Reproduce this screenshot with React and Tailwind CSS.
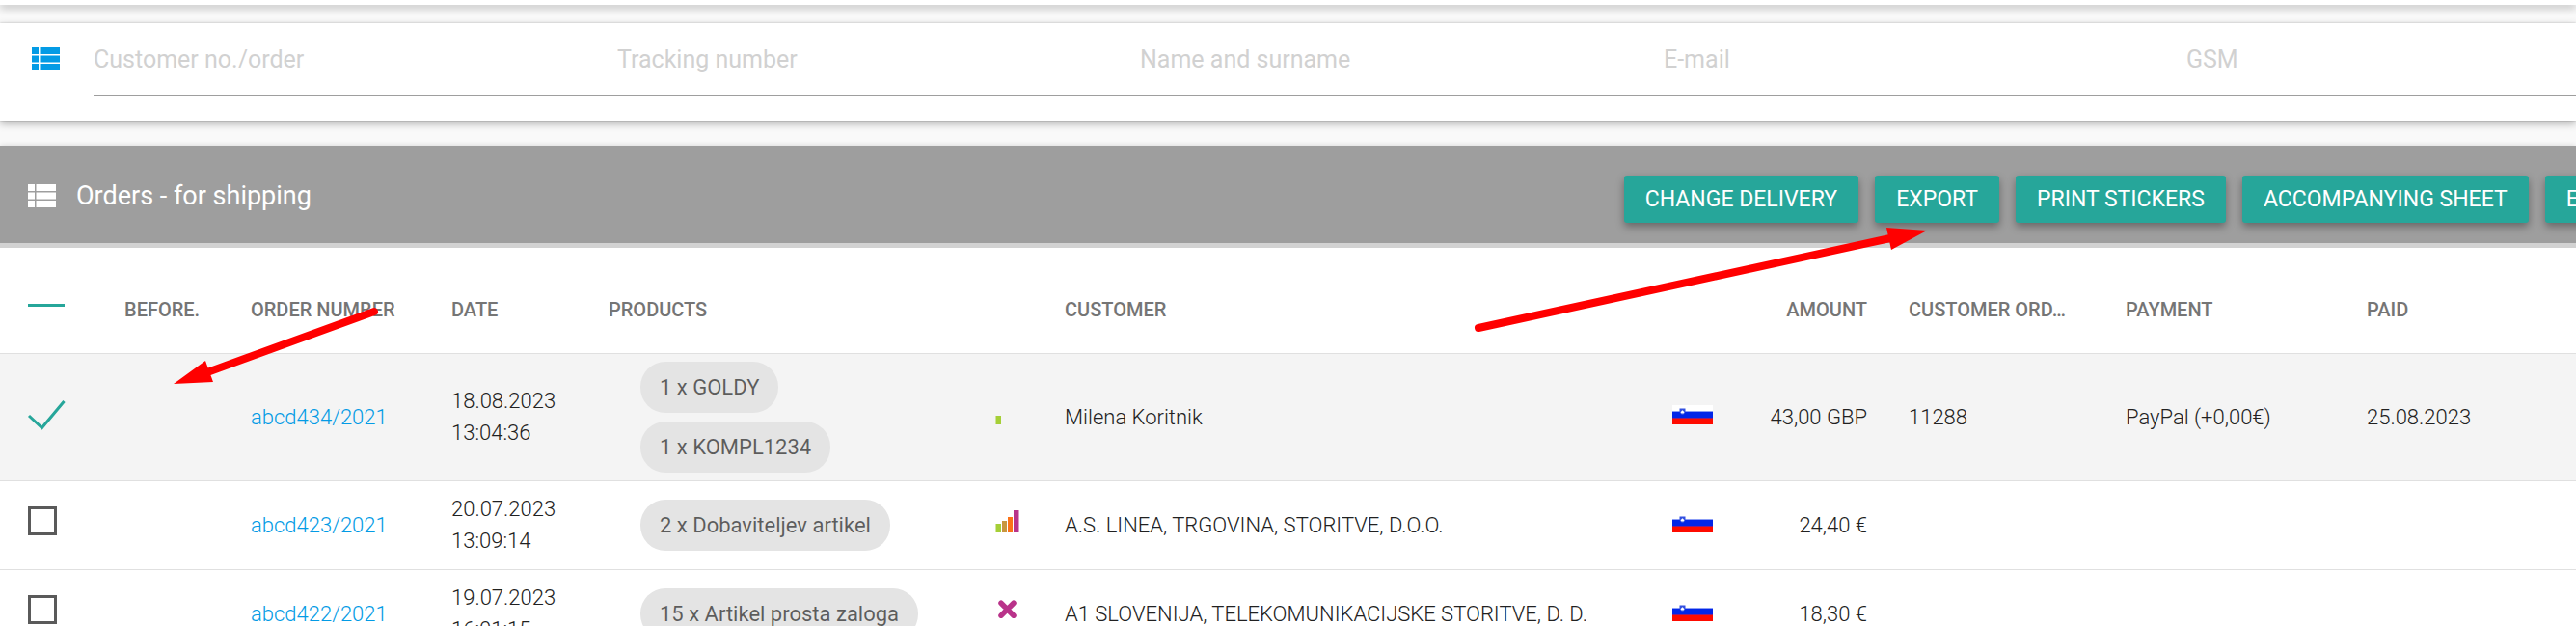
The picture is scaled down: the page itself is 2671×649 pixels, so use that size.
import React, { useState } from 'react';
import { clsx } from 'clsx';

const searchFields = [
  { id: 'customer-no', label: 'Customer no./order' },
  { id: 'tracking', label: 'Tracking number' },
  { id: 'name', label: 'Name and surname' },
  { id: 'email', label: 'E-mail' },
  { id: 'gsm', label: 'GSM' },
];

const actions = ['Change delivery', 'Export', 'Print stickers', 'Accompanying sheet', 'E'];

const initialOrders = [
  {
    id: 'abcd434/2021',
    date: '18.08.2023',
    time: '13:04:36',
    products: ['1 x GOLDY', '1 x KOMPL1234'],
    rating: 'low',
    customer: 'Milena Koritnik',
    amount: '43,00 GBP',
    customerOrder: '11288',
    payment: 'PayPal (+0,00€)',
    paid: '25.08.2023',
    selected: true,
  },
  {
    id: 'abcd423/2021',
    date: '20.07.2023',
    time: '13:09:14',
    products: ['2 x Dobaviteljev artikel'],
    rating: 'high',
    customer: 'A.S. LINEA, TRGOVINA, STORITVE, D.O.O.',
    amount: '24,40 €',
    selected: false,
  },
  {
    id: 'abcd422/2021',
    date: '19.07.2023',
    time: '16:01:15',
    products: ['15 x Artikel prosta zaloga'],
    rating: 'blocked',
    customer: 'A1 SLOVENIJA, TELEKOMUNIKACIJSKE STORITVE, D. D.',
    amount: '18,30 €',
    selected: false,
  },
];

const ListIcon = ({ className }) => (
  <svg viewBox="0 0 29 24" className={clsx('h-6 w-[29px] shrink-0', className)} fill="currentColor" aria-hidden="true">
    <path d="M0 0h7v7H0zM8.500 0H29v7H8.500zM0 8.500h7v7H0zM8.500 8.500H29v7H8.500zM0 17h7v7H0zM8.500 17H29v7H8.500z" />
  </svg>
);

const RatingIcon = ({ rating }) => {
  if (rating === 'blocked') {
    return (
      <svg viewBox="0 0 25 23" className="inline h-[23px] w-[25px] align-baseline" aria-hidden="true">
        <path d="M6 4.200l13 13M19 4.200l-13 13" stroke="#b9338a" strokeWidth="5.500" strokeLinecap="round" />
      </svg>
    );
  }
  return (
    <svg viewBox="0 0 25 23" className="inline h-[23px] w-[25px] align-baseline" aria-hidden="true">
      <rect x="0.500" y="14" width="5.500" height="9" fill="#a5cf37" />
      {rating === 'high' && (
        <>
          <rect x="7" y="11" width="5" height="12" fill="#c8963f" />
          <rect x="13" y="7" width="5" height="16" fill="#fb7318" />
          <rect x="19" y="0" width="5.500" height="23" fill="#b9338a" />
        </>
      )}
    </svg>
  );
};

const Flag = () => (
  <svg viewBox="0 0 42 20" className="inline h-5 w-[42px] align-baseline" role="img" aria-label="Slovenia">
    <rect width="42" height="20" fill="#fff" />
    <rect y="6" width="42" height="8" fill="#0226e8" />
    <rect y="6" width="42" height="1" fill="#8b9df5" />
    <rect y="13" width="42" height="1" fill="#8a1c7a" />
    <rect y="14" width="42" height="6" fill="#fe0b00" />
    <path d="M7.500 3.500h6v3c0 1.500-1.500 3-3 3.500-1.500-.5-3-2-3-3.500z" fill="#3350e0" />
    <path d="M8.500 7.200l2-2 2 2-.8 1.300h-2.400z" fill="#fff" />
  </svg>
);

const RowCheckbox = ({ checked, onChange, label }) => (
  <label className="relative -top-1 flex h-[30px] w-10 cursor-pointer items-center">
    <input
      type="checkbox"
      checked={checked}
      onChange={onChange}
      aria-label={label}
      className="h-[30px] w-[30px] appearance-none border-3 border-[#5a5a5a] checked:border-transparent"
    />
    {checked && (
      <svg viewBox="0 0 40 30" className="absolute left-0 top-0 h-[30px] w-10 overflow-visible" fill="none" aria-hidden="true">
        <path d="M1 18L14.500 30.500 37.500 3" stroke="#26a69a" strokeWidth="3" />
      </svg>
    )}
  </label>
);

const Th = ({ children, className }) => (
  <th className={clsx('pt-5 text-left text-xl font-medium text-[#757575] uppercase', className)}>{children}</th>
);

const App = () => {
  const [orders, setOrders] = useState(initialOrders);
  const allSelected = orders.every((o) => o.selected);
  const someSelected = orders.some((o) => o.selected);

  const toggleOrder = (id) => {
    setOrders(orders.map((o) => (o.id === id ? { ...o, selected: !o.selected } : o)));
  };

  const toggleAll = () => {
    setOrders(orders.map((o) => ({ ...o, selected: !allSelected })));
  };

  return (
    <div className="relative h-screen overflow-hidden bg-[#f9f9f9] font-[Roboto,sans-serif] text-[22px] leading-[33px] text-[#212121]">
      <div className="h-[5px] bg-white shadow-[0_3px_8px_rgba(0,0,0,0.3)]" />

      {/* Search */}
      <form className="mt-[19px] flex items-start bg-white pt-3 pb-[25px] pl-[33px] shadow-[0_3px_8px_rgba(0,0,0,0.3),0_0_2px_rgba(0,0,0,0.2)]">
        <ListIcon className="mt-[13px] text-[#039be5]" />
        <div className="ml-[35px] grid grow grid-cols-[543fr_542fr_543fr_542fr_404fr] border-b border-[#9e9e9e]">
          {searchFields.map((field) => (
            <input
              key={field.id}
              id={field.id}
              type="text"
              aria-label={field.label}
              placeholder={field.label}
              className="h-[63px] min-w-0 bg-transparent pb-3 text-[25px] outline-none placeholder:text-[#d1d1d1]"
            />
          ))}
        </div>
      </form>

      <section className="mt-[26px] bg-white shadow-[0_0_6px_rgba(0,0,0,0.15)]">
        {/* Toolbar */}
        <header className="flex items-center overflow-hidden border-b-5 border-[#d2d2d2] bg-[#9e9e9e] pt-[31px] pb-[21px]">
          <div className="flex w-[63%] shrink-0 items-center gap-[21px] pb-2 pl-[29px] text-white">
            <ListIcon />
            <h1 className="text-[27px] leading-8">Orders - for shipping</h1>
          </div>
          <div className="flex gap-[17px] pl-px">
            {actions.map((action) => (
              <button
                key={action}
                type="button"
                className="h-[49px] shrink-0 rounded-[3px] bg-[#26a69a] px-[22px] text-[23px] whitespace-nowrap text-white uppercase shadow-[0_4px_8px_rgba(0,0,0,0.35)] hover:bg-[#2bbbad]"
              >
                {action}
              </button>
            ))}
          </div>
        </header>

        {/* Orders */}
        <table className="w-full table-fixed border-collapse">
          <colgroup>
            <col className="w-[129px]" />
            <col className="w-[131px]" />
            <col className="w-[208px]" />
            <col className="w-[163px]" />
            <col className="w-[401px]" />
            <col className="w-[72px]" />
            <col className="w-[630px]" />
            <col className="w-[60px]" />
            <col className="w-[185px]" />
            <col className="w-[225px]" />
            <col className="w-[250px]" />
            <col className="w-[217px]" />
          </colgroup>
          <thead>
            <tr className="h-[109px] border-b border-[#e0e0e0]">
              <Th className="pl-[29px]">
                <label className="flex h-3 w-[38px] cursor-pointer items-start">
                  <input
                    type="checkbox"
                    checked={allSelected}
                    onChange={toggleAll}
                    aria-label="Select all orders"
                    className={clsx('h-[3px] w-[38px] appearance-none', someSelected ? 'bg-[#26a69a]' : 'bg-[#5a5a5a]')}
                  />
                </label>
              </Th>
              <Th>Before.</Th>
              <Th>Order number</Th>
              <Th>Date</Th>
              <Th>Products</Th>
              <Th />
              <Th>Customer</Th>
              <Th />
              <Th className="pr-[43px] !text-right">Amount</Th>
              <Th>Customer ord…</Th>
              <Th>Payment</Th>
              <Th>Paid</Th>
            </tr>
          </thead>
          <tbody className="font-light">
            {orders.map((order) => (
              <tr key={order.id} className={clsx('h-[92px] border-b border-[#e0e0e0]', order.selected && 'bg-[#f4f4f4]')}>
                <td className="pl-[29px]">
                  <RowCheckbox
                    checked={order.selected}
                    onChange={() => toggleOrder(order.id)}
                    label={`Select order ${order.id}`}
                  />
                </td>
                <td />
                <td>
                  <a href="#" className="text-[#039be5]">{order.id}</a>
                </td>
                <td>
                  <div>{order.date}</div>
                  <div>{order.time}</div>
                </td>
                <td className="py-2 pl-[33px]">
                  <div className="flex flex-col items-start gap-[9px]">
                    {order.products.map((product) => (
                      <span key={product} className="h-[53px] rounded-[26px] bg-[#e4e4e4] px-5 leading-[53px] font-normal whitespace-nowrap text-black/60">
                        {product}
                      </span>
                    ))}
                  </div>
                </td>
                <td><RatingIcon rating={order.rating} /></td>
                <td className="whitespace-nowrap">{order.customer}</td>
                <td><Flag /></td>
                <td className="pr-[43px] text-right whitespace-nowrap">{order.amount}</td>
                <td>{order.customerOrder}</td>
                <td>{order.payment}</td>
                <td>{order.paid}</td>
              </tr>
            ))}
          </tbody>
        </table>
      </section>

      {/* Pointer arrows */}
      <svg className="pointer-events-none absolute left-0 top-0" width="2671" height="649" fill="none" aria-hidden="true">
        <path d="M388 323L215 386" stroke="#f00" strokeWidth="8" strokeLinecap="round" />
        <path d="M180 398L213 374 221 396z" fill="#f00" />
        <path d="M1533 340L1960 247" stroke="#f00" strokeWidth="8" strokeLinecap="round" />
        <path d="M1998 239L1956 236 1961 259z" fill="#f00" />
      </svg>
    </div>
  );
};

export default App;
